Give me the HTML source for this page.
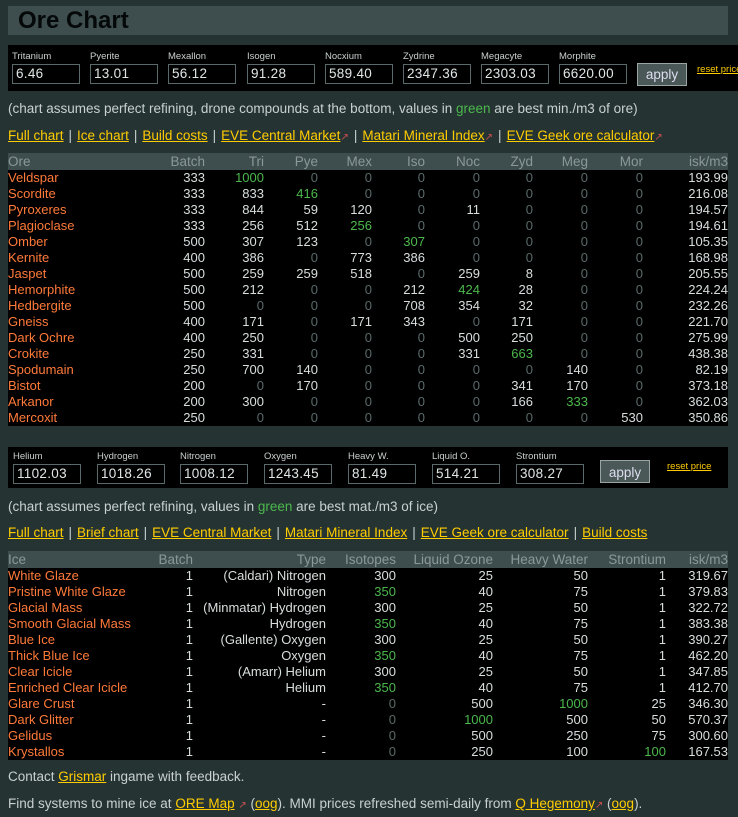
<!DOCTYPE html>
<html><head><meta charset="utf-8"><style>
body{margin:0;background:#253433;font-family:"Liberation Sans",sans-serif;color:#c8d0d0;font-size:13.5px;width:738px;height:817px;overflow:hidden;position:relative}
h1{position:absolute;left:8px;top:6px;width:720px;height:29px;margin:0;background:#3e4e4e;color:#050808;font-size:24px;font-weight:bold;line-height:29px;padding-left:10px;box-sizing:border-box}
.panel{position:absolute;background:#000}
.f{position:absolute}
.f span{display:block;font-size:9.5px;color:#c8d0d0;height:11px;line-height:11px}
.f div{margin-top:2px;width:68px;height:20px;border:1px solid #5a6a6a;box-sizing:border-box;color:#e0e6e6;font-size:13.5px;line-height:18px;padding-left:3px;letter-spacing:.3px}
.btn{position:absolute;background:#4a5858;border:1px solid #9aa6a6;color:#dde;font-size:13.5px;text-align:center;box-sizing:border-box}
a{color:#ffcc00;text-decoration:underline}
.rp{position:absolute;font-size:9.5px;white-space:nowrap}
.g{color:#4cb84c}
.txt{position:absolute;left:8px;white-space:nowrap}
.sep{color:#c8d0d0;padding:0 5px}
.ext{color:#d05050;font-size:10px}
table{position:absolute;left:8px;width:720px;border-collapse:collapse;table-layout:fixed;font-size:13px}
td,th{padding:0;height:16px;line-height:16px;text-align:right;white-space:nowrap;overflow:visible}
th{background:#3e4e4e;color:#8a9898;font-weight:normal;height:17px;font-size:13.5px}
tbody{background:#000;color:#d8dede}
td:first-child,th:first-child{text-align:left}
td:first-child{color:#ff7a3a}
.z{color:#5a6a6a}
</style></head><body>
<h1>Ore Chart</h1>
<div class="panel" style="left:8px;top:45px;width:730px;height:46px">
<div class="f" style="left:4px;top:6px"><span>Tritanium</span><div>6.46</div></div>
<div class="f" style="left:82px;top:6px"><span>Pyerite</span><div>13.01</div></div>
<div class="f" style="left:160px;top:6px"><span>Mexallon</span><div>56.12</div></div>
<div class="f" style="left:239px;top:6px"><span>Isogen</span><div>91.28</div></div>
<div class="f" style="left:317px;top:6px"><span>Nocxium</span><div>589.40</div></div>
<div class="f" style="left:395px;top:6px"><span>Zydrine</span><div>2347.36</div></div>
<div class="f" style="left:473px;top:6px"><span>Megacyte</span><div>2303.03</div></div>
<div class="f" style="left:551px;top:6px"><span>Morphite</span><div>6620.00</div></div>
<div class="btn" style="left:629px;top:18px;width:50px;height:23px;line-height:21px">apply</div>
<a class="rp" style="left:689px;top:19px">reset price</a>
</div>
<div class="txt" style="top:101px">(chart assumes perfect refining, drone compounds at the bottom, values in <span class="g">green</span> are best min./m3 of ore)</div>
<div class="txt" style="top:128px"><a>Full chart</a><span class="sep">|</span><a>Ice chart</a><span class="sep">|</span><a>Build costs</a><span class="sep">|</span><a>EVE Central Market</a><span class="ext">&#x2197;</span><span class="sep">|</span><a>Matari Mineral Index</a><span class="ext">&#x2197;</span><span class="sep">|</span><a>EVE Geek ore calculator</a><span class="ext">&#x2197;</span></div>
<table style="top:153px">
<colgroup><col style="width:142px"><col style="width:55px"><col style="width:59px"><col style="width:54px"><col style="width:54px"><col style="width:53px"><col style="width:55px"><col style="width:53px"><col style="width:55px"><col style="width:55px"><col style="width:85px"></colgroup>
<thead><tr><th>Ore</th><th>Batch</th><th>Tri</th><th>Pye</th><th>Mex</th><th>Iso</th><th>Noc</th><th>Zyd</th><th>Meg</th><th>Mor</th><th>isk/m3</th></tr></thead>
<tbody>
<tr><td>Veldspar</td><td>333</td><td class="g">1000</td><td class="z">0</td><td class="z">0</td><td class="z">0</td><td class="z">0</td><td class="z">0</td><td class="z">0</td><td class="z">0</td><td>193.99</td></tr>
<tr><td>Scordite</td><td>333</td><td>833</td><td class="g">416</td><td class="z">0</td><td class="z">0</td><td class="z">0</td><td class="z">0</td><td class="z">0</td><td class="z">0</td><td>216.08</td></tr>
<tr><td>Pyroxeres</td><td>333</td><td>844</td><td>59</td><td>120</td><td class="z">0</td><td>11</td><td class="z">0</td><td class="z">0</td><td class="z">0</td><td>194.57</td></tr>
<tr><td>Plagioclase</td><td>333</td><td>256</td><td>512</td><td class="g">256</td><td class="z">0</td><td class="z">0</td><td class="z">0</td><td class="z">0</td><td class="z">0</td><td>194.61</td></tr>
<tr><td>Omber</td><td>500</td><td>307</td><td>123</td><td class="z">0</td><td class="g">307</td><td class="z">0</td><td class="z">0</td><td class="z">0</td><td class="z">0</td><td>105.35</td></tr>
<tr><td>Kernite</td><td>400</td><td>386</td><td class="z">0</td><td>773</td><td>386</td><td class="z">0</td><td class="z">0</td><td class="z">0</td><td class="z">0</td><td>168.98</td></tr>
<tr><td>Jaspet</td><td>500</td><td>259</td><td>259</td><td>518</td><td class="z">0</td><td>259</td><td>8</td><td class="z">0</td><td class="z">0</td><td>205.55</td></tr>
<tr><td>Hemorphite</td><td>500</td><td>212</td><td class="z">0</td><td class="z">0</td><td>212</td><td class="g">424</td><td>28</td><td class="z">0</td><td class="z">0</td><td>224.24</td></tr>
<tr><td>Hedbergite</td><td>500</td><td class="z">0</td><td class="z">0</td><td class="z">0</td><td>708</td><td>354</td><td>32</td><td class="z">0</td><td class="z">0</td><td>232.26</td></tr>
<tr><td>Gneiss</td><td>400</td><td>171</td><td class="z">0</td><td>171</td><td>343</td><td class="z">0</td><td>171</td><td class="z">0</td><td class="z">0</td><td>221.70</td></tr>
<tr><td>Dark Ochre</td><td>400</td><td>250</td><td class="z">0</td><td class="z">0</td><td class="z">0</td><td>500</td><td>250</td><td class="z">0</td><td class="z">0</td><td>275.99</td></tr>
<tr><td>Crokite</td><td>250</td><td>331</td><td class="z">0</td><td class="z">0</td><td class="z">0</td><td>331</td><td class="g">663</td><td class="z">0</td><td class="z">0</td><td>438.38</td></tr>
<tr><td>Spodumain</td><td>250</td><td>700</td><td>140</td><td class="z">0</td><td class="z">0</td><td class="z">0</td><td class="z">0</td><td>140</td><td class="z">0</td><td>82.19</td></tr>
<tr><td>Bistot</td><td>200</td><td class="z">0</td><td>170</td><td class="z">0</td><td class="z">0</td><td class="z">0</td><td>341</td><td>170</td><td class="z">0</td><td>373.18</td></tr>
<tr><td>Arkanor</td><td>200</td><td>300</td><td class="z">0</td><td class="z">0</td><td class="z">0</td><td class="z">0</td><td>166</td><td class="g">333</td><td class="z">0</td><td>362.03</td></tr>
<tr><td>Mercoxit</td><td>250</td><td class="z">0</td><td class="z">0</td><td class="z">0</td><td class="z">0</td><td class="z">0</td><td class="z">0</td><td class="z">0</td><td>530</td><td>350.86</td></tr>
</tbody></table>
<div class="panel" style="left:8px;top:447px;width:720px;height:41px">
<div class="f" style="left:5px;top:4px"><span>Helium</span><div>1102.03</div></div>
<div class="f" style="left:89px;top:4px"><span>Hydrogen</span><div>1018.26</div></div>
<div class="f" style="left:172px;top:4px"><span>Nitrogen</span><div>1008.12</div></div>
<div class="f" style="left:256px;top:4px"><span>Oxygen</span><div>1243.45</div></div>
<div class="f" style="left:340px;top:4px"><span>Heavy W.</span><div>81.49</div></div>
<div class="f" style="left:424px;top:4px"><span>Liquid O.</span><div>514.21</div></div>
<div class="f" style="left:508px;top:4px"><span>Strontium</span><div>308.27</div></div>
<div class="btn" style="left:592px;top:13px;width:50px;height:23px;line-height:23px">apply</div>
<a class="rp" style="left:659px;top:14px">reset price</a>
</div>
<div class="txt" style="top:499px">(chart assumes perfect refining, values in <span class="g">green</span> are best mat./m3 of ice)</div>
<div class="txt" style="top:525px"><a>Full chart</a><span class="sep">|</span><a>Brief chart</a><span class="sep">|</span><a>EVE Central Market</a><span class="sep">|</span><a>Matari Mineral Index</a><span class="sep">|</span><a>EVE Geek ore calculator</a><span class="sep">|</span><a>Build costs</a></div>
<table style="top:551px">
<colgroup><col style="width:142px"><col style="width:43px"><col style="width:133px"><col style="width:70px"><col style="width:97px"><col style="width:95px"><col style="width:78px"><col style="width:62px"></colgroup>
<thead><tr><th>Ice</th><th>Batch</th><th>Type</th><th>Isotopes</th><th>Liquid Ozone</th><th>Heavy Water</th><th>Strontium</th><th>isk/m3</th></tr></thead>
<tbody>
<tr><td>White Glaze</td><td>1</td><td>(Caldari) Nitrogen</td><td>300</td><td>25</td><td>50</td><td>1</td><td>319.67</td></tr>
<tr><td>Pristine White Glaze</td><td>1</td><td>Nitrogen</td><td class="g">350</td><td>40</td><td>75</td><td>1</td><td>379.83</td></tr>
<tr><td>Glacial Mass</td><td>1</td><td>(Minmatar) Hydrogen</td><td>300</td><td>25</td><td>50</td><td>1</td><td>322.72</td></tr>
<tr><td>Smooth Glacial Mass</td><td>1</td><td>Hydrogen</td><td class="g">350</td><td>40</td><td>75</td><td>1</td><td>383.38</td></tr>
<tr><td>Blue Ice</td><td>1</td><td>(Gallente) Oxygen</td><td>300</td><td>25</td><td>50</td><td>1</td><td>390.27</td></tr>
<tr><td>Thick Blue Ice</td><td>1</td><td>Oxygen</td><td class="g">350</td><td>40</td><td>75</td><td>1</td><td>462.20</td></tr>
<tr><td>Clear Icicle</td><td>1</td><td>(Amarr) Helium</td><td>300</td><td>25</td><td>50</td><td>1</td><td>347.85</td></tr>
<tr><td>Enriched Clear Icicle</td><td>1</td><td>Helium</td><td class="g">350</td><td>40</td><td>75</td><td>1</td><td>412.70</td></tr>
<tr><td>Glare Crust</td><td>1</td><td>-</td><td class="z">0</td><td>500</td><td class="g">1000</td><td>25</td><td>346.30</td></tr>
<tr><td>Dark Glitter</td><td>1</td><td>-</td><td class="z">0</td><td class="g">1000</td><td>500</td><td>50</td><td>570.37</td></tr>
<tr><td>Gelidus</td><td>1</td><td>-</td><td class="z">0</td><td>500</td><td>250</td><td>75</td><td>300.60</td></tr>
<tr><td>Krystallos</td><td>1</td><td>-</td><td class="z">0</td><td>250</td><td>100</td><td class="g">100</td><td>167.53</td></tr>
</tbody></table>
<div class="txt" style="top:769px">Contact <a>Grismar</a> ingame with feedback.</div>
<div class="txt" style="top:796px">Find systems to mine ice at <a>ORE Map</a> <span class="ext">&#x2197;</span> (<a>oog</a>). MMI prices refreshed semi-daily from <a>Q Hegemony</a><span class="ext">&#x2197;</span> (<a>oog</a>).</div>
</body></html>
